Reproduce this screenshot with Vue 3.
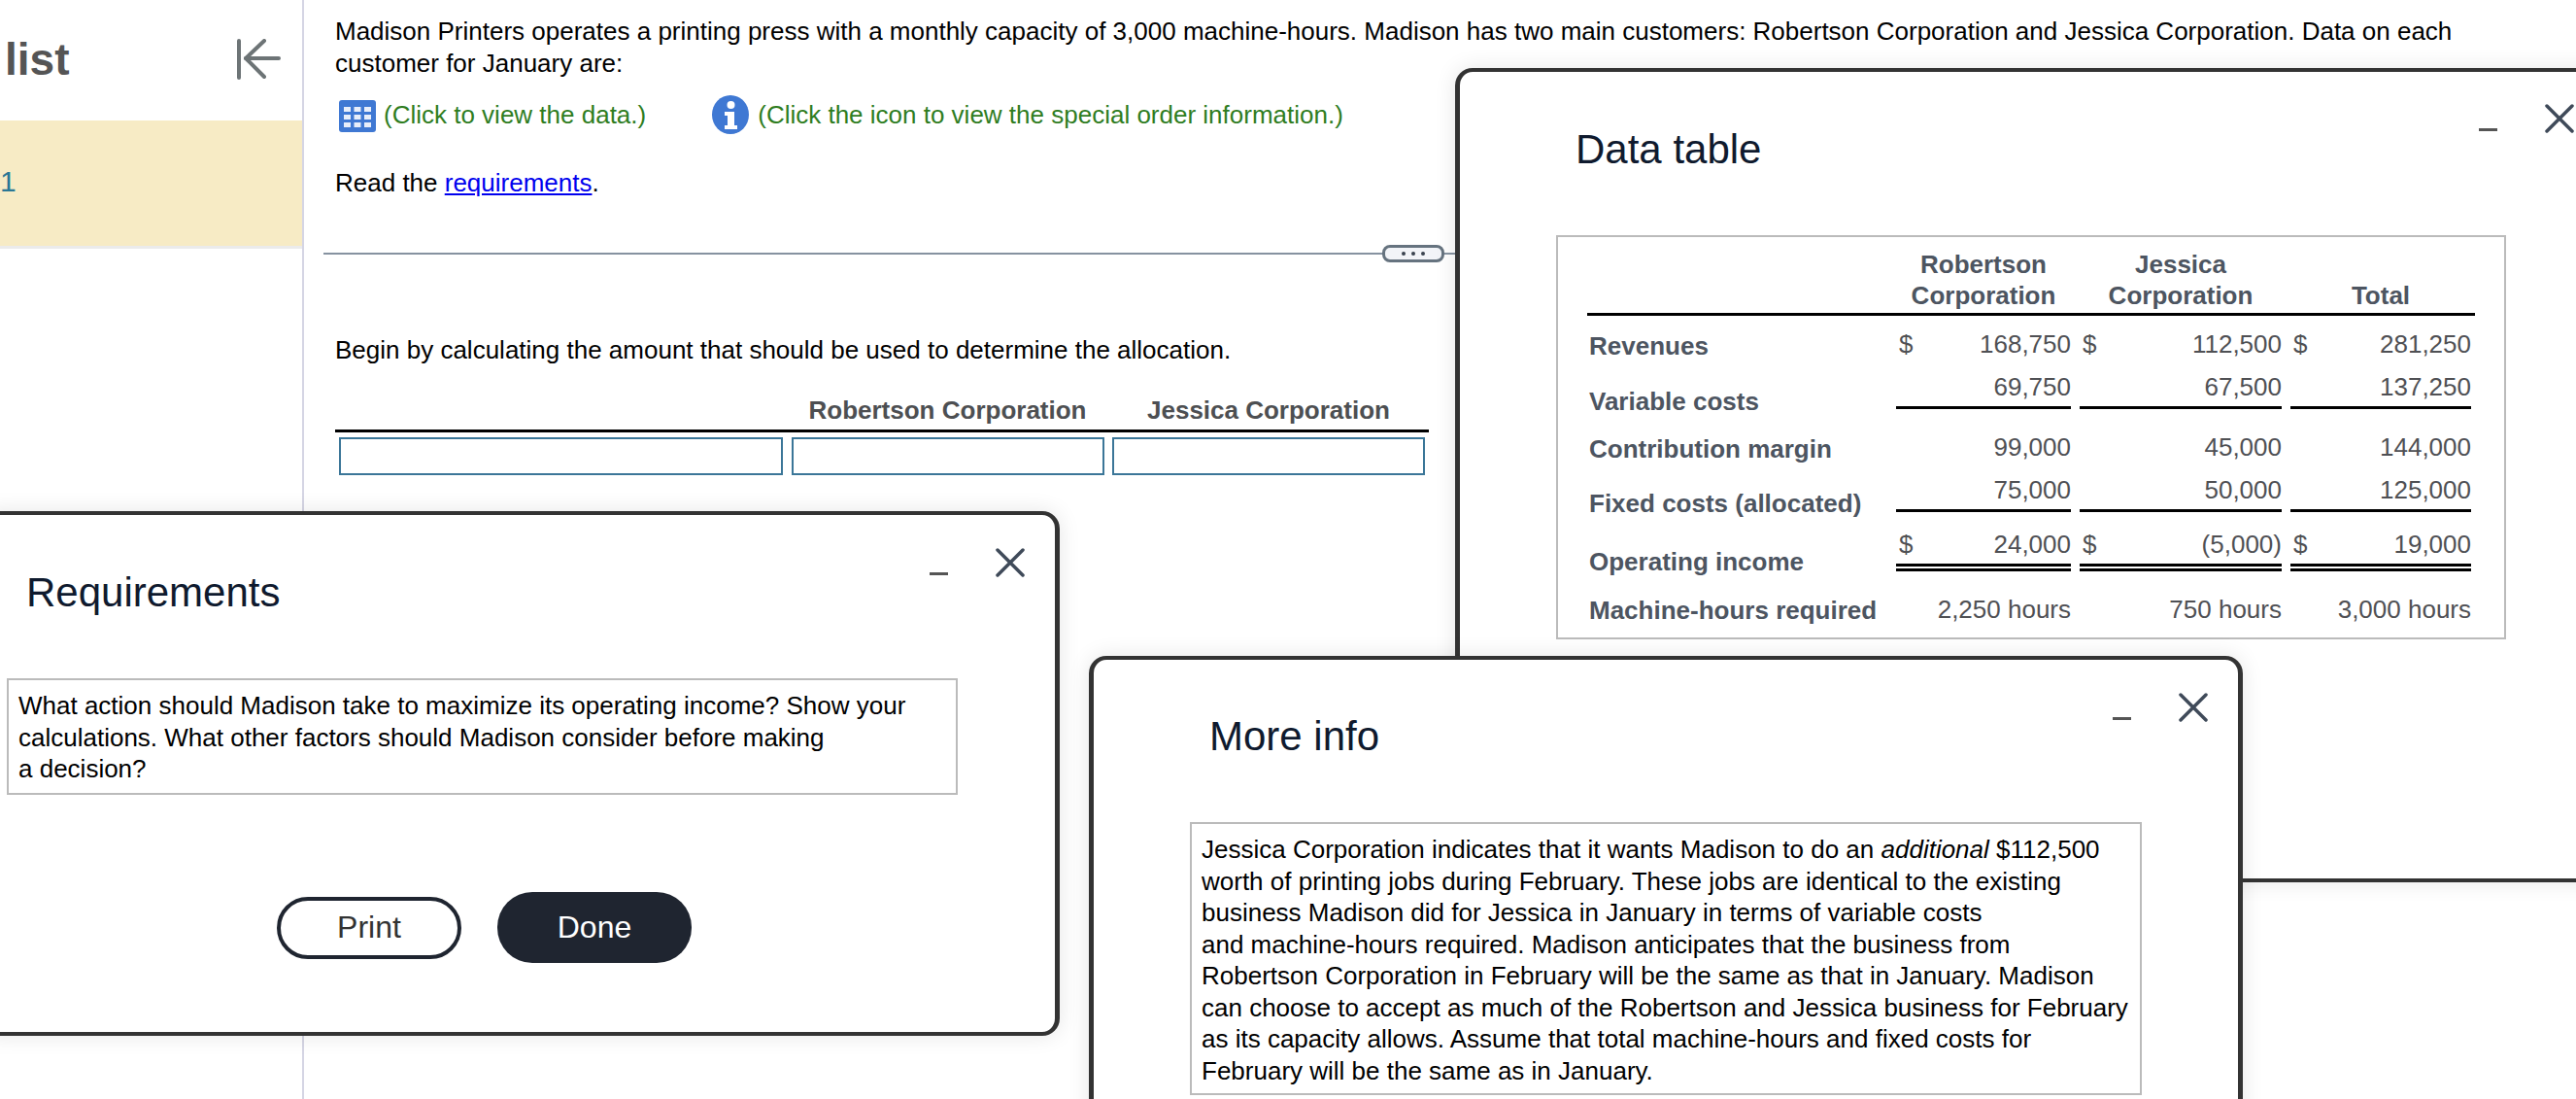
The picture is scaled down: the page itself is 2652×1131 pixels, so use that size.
<script setup>
const rows = [
  { cls: 'r1', label: 'Revenues', cells: [['$', '168,750'], ['$', '112,500'], ['$', '281,250']] },
  { cls: 'r2 under', label: 'Variable costs', cells: [['', '69,750'], ['', '67,500'], ['', '137,250']] },
  { cls: 'r3', label: 'Contribution margin', cells: [['', '99,000'], ['', '45,000'], ['', '144,000']] },
  { cls: 'r4 under', label: 'Fixed costs (allocated)', cells: [['', '75,000'], ['', '50,000'], ['', '125,000']] },
  { cls: 'r5 dbl', label: 'Operating income', cells: [['$', '24,000'], ['$', '(5,000)'], ['$', '19,000']] },
  { cls: 'r6', label: 'Machine-hours required', cells: [['', '2,250 hours'], ['', '750 hours'], ['', '3,000 hours']] }
]
</script>

<template>
  <div class="page">
    <aside class="sidebar">
      <div class="side-head">
        <span class="side-title">list</span>
        <svg class="collapse" width="46" height="42" viewBox="0 0 46 42" fill="none" stroke="#6d7476" stroke-width="4" stroke-linecap="round" stroke-linejoin="round">
          <path d="M3 2v38" />
          <path d="M44 20H10" />
          <path d="M29 2 10 20l19 19" />
        </svg>
      </div>
      <div class="side-item"><span class="side-num">1</span></div>
    </aside>

    <main class="main">
      <p class="para">Madison Printers operates a printing press with a monthly capacity of 3,000 machine-hours. Madison has two main customers: Robertson Corporation and Jessica Corporation. Data on each<br />customer for January are:</p>
      <div class="links">
        <span class="link-item first">
          <svg width="38" height="33" viewBox="0 0 38 33">
            <rect width="38" height="33" rx="3" fill="#3f78d3" />
            <g fill="#e8eefa">
              <rect x="5" y="7" width="7" height="5" /><rect x="15.5" y="7" width="7" height="5" /><rect x="26" y="7" width="7" height="5" />
              <rect x="5" y="15" width="7" height="5" /><rect x="15.5" y="15" width="7" height="5" /><rect x="26" y="15" width="7" height="5" />
              <rect x="5" y="23" width="7" height="5" /><rect x="15.5" y="23" width="7" height="5" /><rect x="26" y="23" width="7" height="5" />
            </g>
          </svg>
          <span>(Click to view the data.)</span>
        </span>
        <span class="link-item second">
          <svg width="38" height="40" viewBox="0 0 38 40">
            <ellipse cx="19" cy="20" rx="19" ry="20" fill="#3f78d3" />
            <circle cx="19.500" cy="10" r="4" fill="#fff" />
            <path d="M13 17h10v14h3v4H13v-4h3v-10h-3z" fill="#fff" />
          </svg>
          <span>(Click the icon to view the special order information.)</span>
        </span>
      </div>
      <p class="para read">Read the <a class="req" href="#">requirements</a>.</p>
      <div class="divider">
        <span class="rule"></span>
        <span class="pill"><i></i><i></i><i></i></span>
        <span class="rule tail"></span>
      </div>
      <p class="para begin">Begin by calculating the amount that should be used to determine the allocation.</p>
      <div class="alloc">
        <div class="alloc-head">
          <span></span>
          <span>Robertson Corporation</span>
          <span>Jessica Corporation</span>
        </div>
        <div class="alloc-row">
          <input class="cell" type="text" />
          <input class="cell" type="text" />
          <input class="cell" type="text" />
        </div>
      </div>
    </main>

    <section class="win win-data">
      <div class="controls">
        <span class="min"></span>
        <svg class="close" width="30" height="30" viewBox="0 0 30 30" fill="none" stroke="#3f4a59" stroke-width="3.500" stroke-linecap="round"><path d="M2 2l26 26M28 2 2 28" /></svg>
      </div>
      <h2 class="title">Data table</h2>
      <div class="box data-box">
        <div class="t-head">
          <span></span>
          <span>Robertson<br />Corporation</span>
          <span>Jessica<br />Corporation</span>
          <span>Total</span>
        </div>
        <div v-for="row in rows" :key="row.label" class="t-row" :class="row.cls">
          <span class="t-label">{{ row.label }}</span>
          <span v-for="(c, i) in row.cells" :key="i" class="t-num">
            <span>{{ c[0] }}</span><span>{{ c[1] }}</span>
          </span>
        </div>
      </div>
    </section>

    <section class="win win-req">
      <div class="controls">
        <span class="min"></span>
        <svg class="close" width="30" height="30" viewBox="0 0 30 30" fill="none" stroke="#3f4a59" stroke-width="3.500" stroke-linecap="round"><path d="M2 2l26 26M28 2 2 28" /></svg>
      </div>
      <h2 class="title">Requirements</h2>
      <div class="box req-box">What action should Madison take to maximize its operating income? Show your<br />calculations. What other factors should Madison consider before making<br />a decision?</div>
      <div class="actions">
        <button class="btn print">Print</button>
        <button class="btn done">Done</button>
      </div>
    </section>

    <section class="win win-more">
      <div class="controls">
        <span class="min"></span>
        <svg class="close" width="30" height="30" viewBox="0 0 30 30" fill="none" stroke="#3f4a59" stroke-width="3.500" stroke-linecap="round"><path d="M2 2l26 26M28 2 2 28" /></svg>
      </div>
      <h2 class="title">More info</h2>
      <div class="box more-box">Jessica Corporation indicates that it wants Madison to do an <em>additional</em> $112,500<br />worth of printing jobs during February. These jobs are identical to the existing<br />business Madison did for Jessica in January in terms of variable costs<br />and machine-hours required. Madison anticipates that the business from<br />Robertson Corporation in February will be the same as that in January. Madison<br />can choose to accept as much of the Robertson and Jessica business for February<br />as its capacity allows. Assume that total machine-hours and fixed costs for<br />February will be the same as in January.</div>
    </section>
  </div>
</template>

<style>
html, body { margin: 0; background: #fff; overflow: hidden; }
</style>

<style scoped>
.page {
  position: relative;
  display: flex;
  width: 2652px;
  height: 1131px;
  overflow: hidden;
  background: #fff;
  color: #000;
  font-family: "Liberation Sans", Arial, sans-serif;
  font-size: 26px;
  line-height: 32.5px;
}
.sidebar {
  box-sizing: border-box;
  flex: 0 0 313px;
  border-right: 2px solid #d5d5e4;
}
.side-head {
  display: flex;
  justify-content: space-between;
  align-items: center;
  height: 124px;
  padding: 0 22px 2px 5px;
  box-sizing: border-box;
}
.side-title {
  color: #555;
  font-size: 46px;
  font-weight: 700;
  line-height: 50px;
}
.side-item {
  display: flex;
  align-items: center;
  box-sizing: border-box;
  height: 132px;
  background: #f7ebc5;
  border-bottom: 3px solid #ebebeb;
  padding-bottom: 3px;
}
.side-num { color: #2a7795; font-size: 30px; }
.main {
  flex: 1;
  padding: 16px 0 0 32px;
  min-width: 0;
}
.para { margin: 0; white-space: nowrap; }
.links {
  display: flex;
  align-items: center;
  height: 40px;
  margin-top: 17px;
  color: #2f7d1f;
}
.link-item { display: flex; align-items: center; white-space: nowrap; }
.first { gap: 8px; margin-left: 4px; }
.first svg { margin-top: 3px; }
.second { gap: 9px; margin-left: 68px; }
.read { margin-top: 34px; }
.req { color: #0000ee; text-decoration: underline; }
.divider {
  display: flex;
  align-items: center;
  height: 18px;
  margin: 47px 0 0 -12px;
}
.rule {
  flex: 0 0 1090px;
  height: 2px;
  background: #8692a0;
}
.rule.tail { flex: 1; }
.pill {
  box-sizing: border-box;
  display: flex;
  justify-content: center;
  align-items: center;
  gap: 6px;
  flex: 0 0 64px;
  height: 18px;
  background: #f2f4f8;
  border: 3px solid #66737f;
  border-radius: 8px;
}
.pill i {
  width: 4px;
  height: 4px;
  border-radius: 50%;
  background: #39424e;
}
.begin { margin-top: 74px; }
.alloc { width: 1126px; margin-top: 30px; }
.alloc-head {
  display: grid;
  grid-template-columns: 457px 322px 322px;
  column-gap: 8.500px;
  padding: 0 4px 3px;
  border-bottom: 3px solid #000;
  color: #4d4f52;
  font-weight: 700;
  text-align: center;
  white-space: nowrap;
}
.alloc-row {
  display: grid;
  grid-template-columns: 457px 322px 322px;
  column-gap: 8.500px;
  padding: 5px 4px 0;
}
.cell {
  box-sizing: border-box;
  width: 100%;
  height: 39px;
  padding: 0;
  background: #fff;
  border: 2px solid #3b7698;
  border-radius: 0;
}
.win {
  position: absolute;
  box-sizing: border-box;
  background: #fff;
  border-style: solid;
  border-color: #333;
  border-width: 4px 5px;
  border-radius: 18px;
  box-shadow: 0 0 22px rgba(0, 0, 0, 0.1);
}
.title {
  margin: 0;
  color: #0f1a2e;
  font-size: 42px;
  font-weight: 400;
  line-height: 50px;
  white-space: nowrap;
}
.box {
  box-sizing: border-box;
  border: 2px solid #bbb;
  white-space: nowrap;
}
.controls {
  position: absolute;
  width: 98px;
  height: 30px;
}
.min {
  position: absolute;
  left: 0;
  bottom: 2px;
  width: 19px;
  height: 3px;
  background: #555;
}
.close {
  position: absolute;
  right: 0;
  top: 0;
}
.win-data {
  left: 1498px;
  top: 70px;
  width: 1300px;
  height: 838px;
  padding: 55px 0 0 119px;
  z-index: 1;
}
.win-data .controls { left: 1049px; top: 33px; }
.data-box {
  width: 978px;
  height: 416px;
  margin: 63px 0 0 -20px;
  padding: 12px 30px 0;
  color: #4d5561;
}
.t-head, .t-row {
  display: grid;
  grid-template-columns: 309px 180px 208px 186px;
  column-gap: 9px;
}
.t-head {
  width: 914px;
  border-bottom: 3px solid #000;
  padding-bottom: 2px;
  font-weight: 700;
  text-align: center;
  align-items: end;
  line-height: 32px;
}
.t-row { line-height: 32px; }
.t-label { font-weight: 700; align-self: end; white-space: nowrap; padding-left: 2px; }
.t-num {
  display: flex;
  justify-content: space-between;
  align-self: start;
  padding-left: 3px;
  white-space: nowrap;
  color: #4f5054;
}
.r1 { height: 52px; }
.r1 .t-num { padding-top: 13px; }
.r1 .t-label { padding-bottom: 5px; }
.r2 { height: 54px; }
.r2 .t-num { padding-top: 5px; }
.r2 .t-label { padding-bottom: 2px; }
.r3 { height: 50px; }
.r3 .t-num { padding-top: 13px; }
.r3 .t-label { padding-bottom: 3px; }
.r4 { height: 54px; }
.r4 .t-num { padding-top: 7px; }
.r4 .t-label { padding-bottom: 1px; }
.r5 { height: 60px; }
.r5 .t-num { padding-top: 9px; }
.r5 .t-label { padding-bottom: 1px; }
.r6 { height: 50px; }
.r6 .t-num { padding-top: 16px; }
.r6 .t-label { padding-bottom: 1px; }
.under .t-num { padding-bottom: 4px; border-bottom: 3px solid #000; }
.dbl .t-num { padding-bottom: 4px; border-bottom: 8px double #000; }
.win-req {
  left: -20px;
  top: 526px;
  width: 1111px;
  height: 540px;
  padding: 55px 0 0 42px;
  z-index: 2;
}
.win-req .controls { left: 972px; top: 34px; }
.req-box {
  width: 979px;
  height: 120px;
  margin: 63px 0 0 -20px;
  padding: 10px 10px 0;
}
.actions {
  display: flex;
  align-items: center;
  gap: 37px;
  margin: 100px 0 0 258px;
}
.btn {
  box-sizing: border-box;
  font-family: inherit;
  font-size: 32px;
  padding: 0;
}
.print {
  width: 190px;
  height: 64px;
  background: #fff;
  color: #333;
  border: 4px solid #1f2530;
  border-radius: 32px;
}
.done {
  width: 200px;
  height: 73px;
  background: #1f2530;
  color: #fff;
  border: 0;
  border-radius: 36px;
}
.win-more {
  left: 1121px;
  top: 675px;
  width: 1188px;
  height: 600px;
  padding: 54px 0 0 119px;
  z-index: 3;
}
.win-more .controls { left: 1049px; top: 34px; }
.more-box {
  width: 980px;
  height: 281px;
  margin: 63px 0 0 -20px;
  padding: 10px 10px 0;
}
</style>
